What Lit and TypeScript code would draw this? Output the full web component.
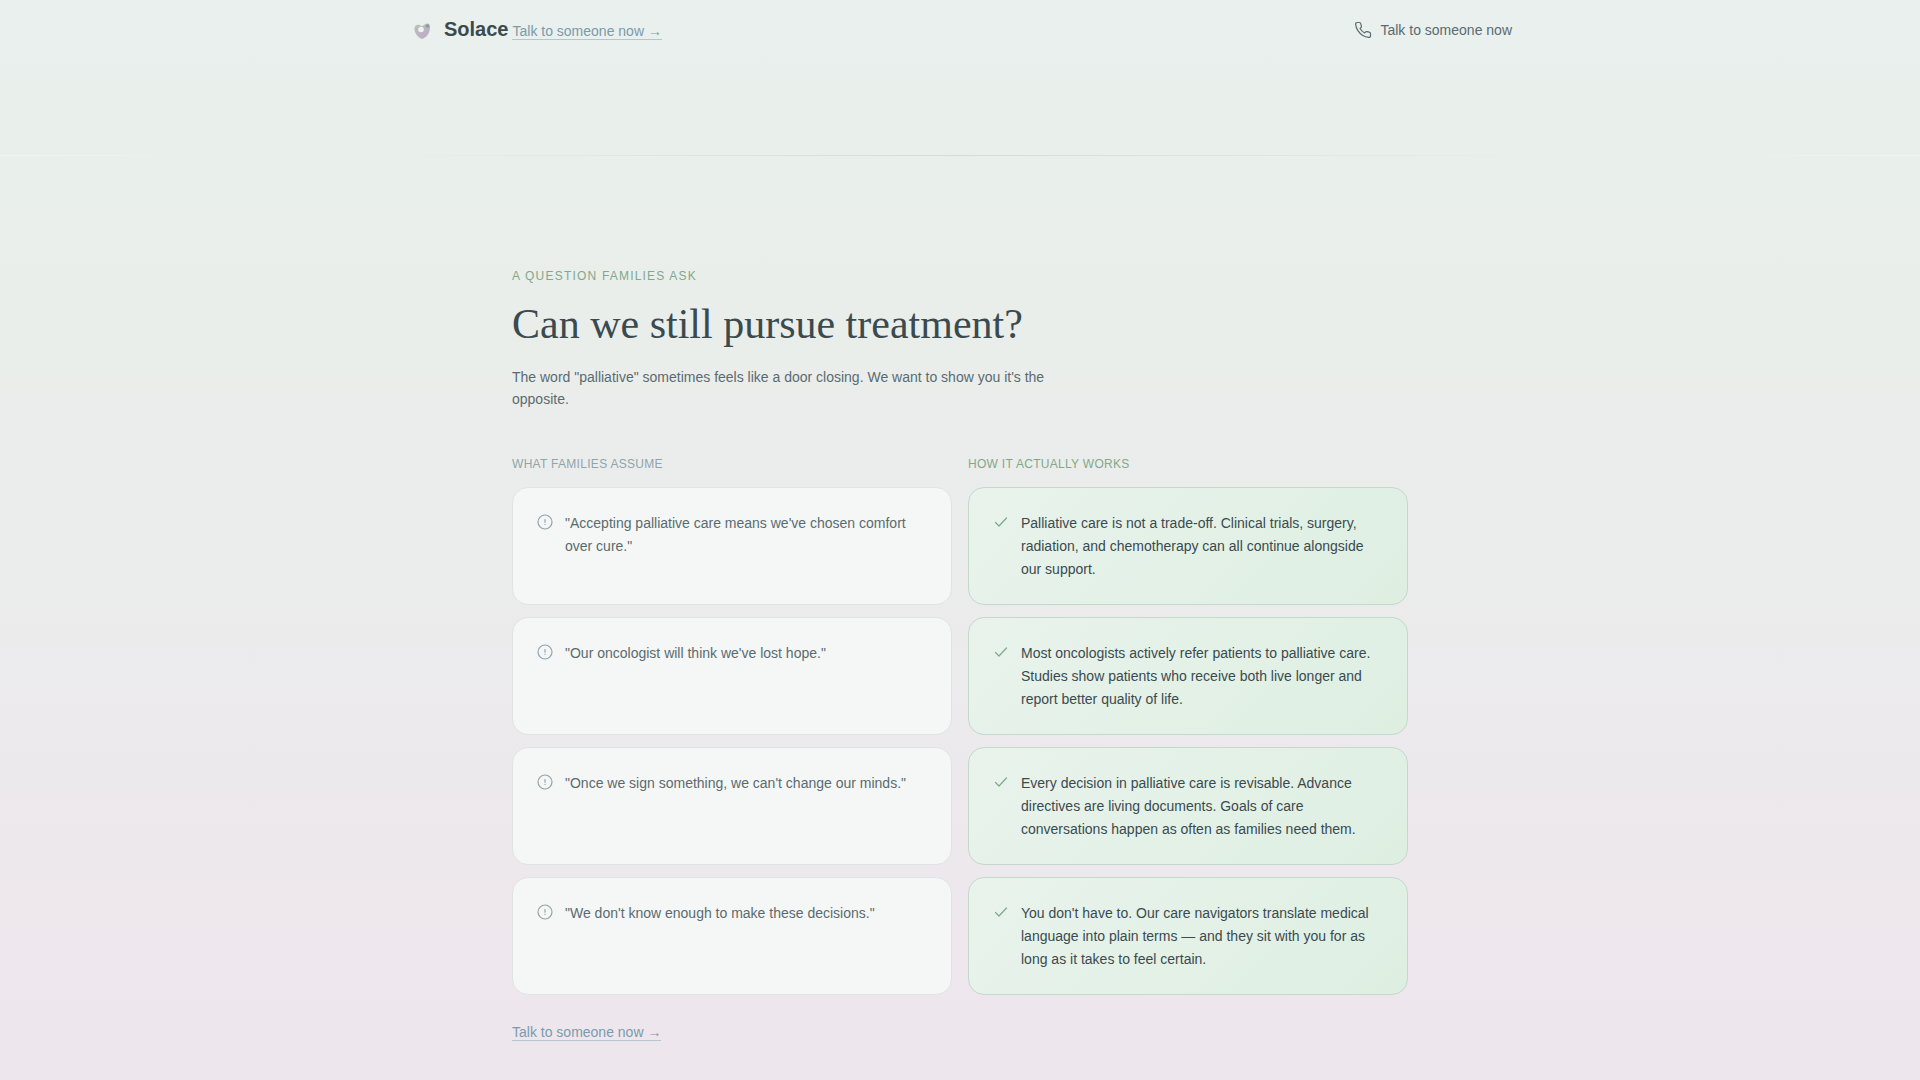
import { LitElement, html, css, svg } from "lit";
import { customElement } from "lit/decorators.js";

const pairs = [
  {
    myth: `"Accepting palliative care means we've chosen comfort over cure."`,
    fact: "Palliative care is not a trade-off. Clinical trials, surgery, radiation, and chemotherapy can all continue alongside our support.",
  },
  {
    myth: `"Our oncologist will think we've lost hope."`,
    fact: "Most oncologists actively refer patients to palliative care. Studies show patients who receive both live longer and report better quality of life.",
  },
  {
    myth: `"Once we sign something, we can't change our minds."`,
    fact: "Every decision in palliative care is revisable. Advance directives are living documents. Goals of care conversations happen as often as families need them.",
  },
  {
    myth: `"We don't know enough to make these decisions."`,
    fact: "You don't have to. Our care navigators translate medical language into plain terms — and they sit with you for as long as it takes to feel certain.",
  },
];

const alertShape = svg`<circle cx="8" cy="8" r="7"></circle><path d="M8 5.500v2.700M8 10.300v.2"></path>`;
const checkShape = svg`<path d="M2.500 8.500 6 12l7.500-8"></path>`;

@customElement("app-root")
export class AppRoot extends LitElement {
  static styles = css`
    :host {
      display: block;
      min-height: 100vh;
      box-sizing: border-box;
      background: linear-gradient(180deg, #e9f0ee 0%, #e9efea 18%, #ebecec 52%, #eee6ed 95%, #eee6ed 100%);
      color: #3a4a4f;
      font-family: "Liberation Sans", Arial, sans-serif;
      font-size: 14px;
      line-height: 22px;
    }
    .bar {
      display: flex;
      align-items: center;
      justify-content: space-between;
      box-sizing: border-box;
      max-width: 1104px;
      height: 60px;
      margin: 0 auto;
    }
    .brand {
      display: flex;
      align-items: baseline;
      gap: 4px;
    }
    .home {
      color: #3a4a4f;
      font-size: 20px;
      font-weight: 700;
      line-height: 28px;
      text-decoration: none;
    }
    .mark {
      width: 28px;
      height: 28px;
      margin-right: 8px;
      vertical-align: middle;
    }
    .call {
      display: flex;
      align-items: center;
      gap: 8px;
      color: #5a6b70;
      text-decoration: none;
    }
    .icon {
      flex: none;
      width: 16px;
      height: 16px;
      fill: none;
      stroke: currentColor;
      stroke-width: 1.2;
      stroke-linecap: round;
      stroke-linejoin: round;
    }
    .icon.phone {
      width: 18px;
      height: 18px;
      stroke-width: 1.6;
    }
    .rule {
      height: 1px;
      margin: 95px 0 0;
      border: 0;
      background: linear-gradient(90deg, #f1f6f4 0%, #e9efeb 10%, #e9efeb 20%, #d3ddd7 50%, #e9efeb 80%, #e9efeb 90%, #f1f6f4 100%);
    }
    .content {
      max-width: 896px;
      margin: 0 auto;
      padding: 109px 0 36px;
    }
    .eyebrow {
      margin: 0;
      color: #81a88a;
      font-size: 12px;
      letter-spacing: 0.1em;
      text-transform: uppercase;
    }
    .title {
      margin: 12px 0 16px;
      font-family: "Liberation Serif", "Times New Roman", serif;
      font-size: 42px;
      font-weight: 400;
      line-height: 51px;
    }
    .intro {
      max-width: 540px;
      margin: 0 0 43px;
      color: #5a6b70;
    }
    .compare {
      display: grid;
      grid-template-columns: 1fr 1fr;
      gap: 12px 16px;
    }
    .label {
      margin: 0;
      color: #90a4ab;
      font-size: 12px;
      font-weight: 400;
      letter-spacing: 0.025em;
      text-transform: uppercase;
    }
    .label.good {
      color: #81a88a;
    }
    .card {
      display: flex;
      gap: 12px;
      padding: 24px 24px 23px;
      border: 1px solid #dfe3e2;
      border-radius: 16px;
      background: #f5f7f6;
      color: #5a6b70;
      line-height: 23px;
    }
    .card .icon {
      margin-top: 2px;
      color: #90a4ab;
    }
    .card.good {
      border-color: #c4d8cb;
      background: linear-gradient(135deg, #e9f3ec, #deefe2);
      color: #3a4a4f;
    }
    .card.good .icon {
      color: #81a88a;
    }
    .card p {
      margin: 0;
    }
    .talk {
      border-bottom: 1px solid #b6c6cd;
      color: #7a9bab;
      line-height: 16px;
      text-decoration: none;
    }
    .more {
      margin: 26px 0 0;
    }
  `;

  render() {
    return html`
      <header class="bar">
        <div class="brand">
          <a class="home" href="#"
            ><svg class="mark" viewBox="0 0 28 28" aria-hidden="true">
              <defs>
                <linearGradient id="petal" x1="0" y1="0" x2="1" y2="1">
                  <stop offset="0" stop-color="#b4c6b6"></stop>
                  <stop offset="0.5" stop-color="#bcb4c0"></stop>
                  <stop offset="1" stop-color="#c4a9cd"></stop>
                </linearGradient>
              </defs>
              <path d="M14 22C9.500 20 6.500 16 6.500 11.500c0-3 2.500-4.500 5-3.500 1 .5 2 1.500 3 1 1.500-1 3-2.500 5-2.500 2 0 2.700 2 2.500 4.500C21.700 16 19 20.500 14 22z" fill="url(#petal)"></path>
              <circle cx="19.500" cy="9" r="1.800" fill="#8a9f91"></circle>
              <circle cx="13" cy="12.500" r="2.800" fill="#f0f2f1"></circle></svg
            >Solace</a
          >
          <a class="talk" href="#talk">Talk to someone now →</a>
        </div>
        <a class="call" href="tel:">
          <svg class="icon phone" viewBox="0 0 24 24" aria-hidden="true">
            <path
              d="M22 16.920v3a2 2 0 0 1-2.180 2 19.790 19.790 0 0 1-8.630-3.070 19.500 19.500 0 0 1-6-6 19.790 19.790 0 0 1-3.070-8.670A2 2 0 0 1 4.110 2h3a2 2 0 0 1 2 1.720 12.840 12.840 0 0 0 .7 2.810 2 2 0 0 1-.45 2.110L8.090 9.910a16 16 0 0 0 6 6l1.270-1.270a2 2 0 0 1 2.110-.45 12.840 12.840 0 0 0 2.810.7A2 2 0 0 1 22 16.920z"
            ></path>
          </svg>
          Talk to someone now
        </a>
      </header>
      <hr class="rule" />
      <main class="content">
        <p class="eyebrow">A question families ask</p>
        <h1 class="title">Can we still pursue treatment?</h1>
        <p class="intro">
          The word "palliative" sometimes feels like a door closing. We want to show you it's the opposite.
        </p>
        <section class="compare">
          <h2 class="label">What families assume</h2>
          <h2 class="label good">How it actually works</h2>
          ${pairs.map(
            ({ myth, fact }) => html`
              <div class="card">
                <svg class="icon" viewBox="0 0 16 16" aria-hidden="true">${alertShape}</svg>
                <p>${myth}</p>
              </div>
              <div class="card good">
                <svg class="icon" viewBox="0 0 16 16" aria-hidden="true">${checkShape}</svg>
                <p>${fact}</p>
              </div>
            `,
          )}
        </section>
        <p class="more"><a class="talk" href="#talk">Talk to someone now →</a></p>
      </main>
    `;
  }
}
